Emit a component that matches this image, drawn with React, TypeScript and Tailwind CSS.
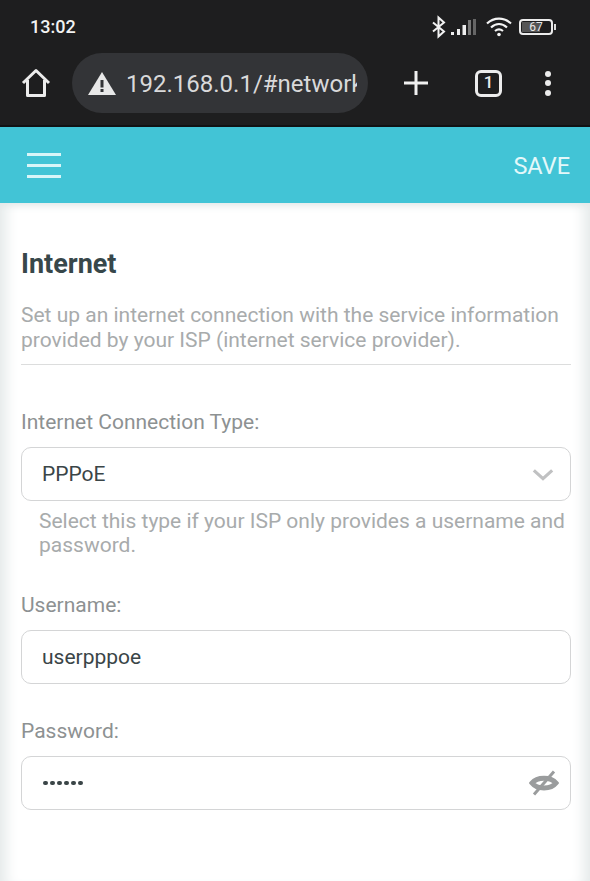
import React from "react";

const StatusIcons = () => (
  <div className="flex items-center">
    {/* bluetooth */}
    <svg width="16" height="24" viewBox="0 0 16 24" fill="none" stroke="#f2f2f2" strokeWidth="2">
      <path d="M2 7.5 L13 16.5 L7.5 21.5 V2.5 L13 7.5 L2 16.5" />
    </svg>
    {/* signal */}
    <svg width="28" height="20" viewBox="0 0 28 20" className="ml-[3px]">
      <rect x="1" y="15" width="3" height="3" fill="#eee" />
      <rect x="7" y="12" width="3" height="6" fill="#eee" />
      <rect x="12.5" y="8" width="3.5" height="10" fill="#eee" />
      <rect x="18" y="3" width="3" height="15" fill="#777" />
      <rect x="23" y="2" width="3" height="16" fill="#666" />
    </svg>
    {/* wifi */}
    <svg width="26" height="22" viewBox="0 0 26 22" fill="none" stroke="#f4f4f4" strokeWidth="2.2" className="ml-[8px]">
      <path d="M1 7.5 C8 1 18 1 25 7.5" />
      <path d="M5 11.5 C10 7 16 7 21 11.5" />
      <path d="M9 15 C11.5 13 14.5 13 17 15" />
      <circle cx="13" cy="18.5" r="1.8" fill="#f4f4f4" stroke="none" />
    </svg>
    {/* battery */}
    <div className="ml-[7px] flex items-center">
      <div className="relative flex h-[16px] w-[34px] items-center justify-center rounded-[4px] border-2 border-[#ececec]">
        <div className="absolute inset-y-[1px] left-[1px] w-[18px] bg-[#555]" />
        <span className="relative text-[12px] leading-none text-[#e8e8e8]">67</span>
      </div>
      <div className="ml-[1px] h-[6px] w-[2px] bg-[#ddd]" />
    </div>
  </div>
);

const EyeOff = () => (
  <svg width="30" height="26" viewBox="0 0 30 26" fill="none">
    <path d="M3 13 C8 6.500 22 6.500 27 13 C22 19.500 8 19.500 3 13 Z" stroke="#9a9c9d" strokeWidth="5" />
    <path d="M5 24.500 L25 1.500" stroke="#9a9c9d" strokeWidth="3" />
  </svg>
);

export default function App() {
  return (
    <div className="flex h-[881px] w-[590px] flex-col overflow-hidden bg-white font-['Roboto',sans-serif]">
      <div className="h-[127px] shrink-0 border-b-2 border-[#111214] bg-[#1e1e1f]">
        <div className="flex h-[53px] items-center justify-between pl-[30px] pr-[34px]">
          <span className="text-[18px] font-medium text-[#f2f2f2]">13:02</span>
          <StatusIcons />
        </div>
        <div className="flex h-[60px] items-center">
          <div className="flex w-[72px] justify-center">
            <svg width="30" height="30" viewBox="0 0 30 30" fill="none" stroke="#ececec" strokeWidth="3" strokeLinejoin="round">
              <path d="M2 15 L15 2.500 L28 15" />
              <path d="M6.500 12 V27.500 H23.500 V12" />
            </svg>
          </div>
          <div className="flex h-[60px] w-[296px] items-center overflow-hidden rounded-full bg-[#333437] pl-[16px] pr-[11px]">
            <svg width="28" height="24" viewBox="0 0 28 24" className="shrink-0">
              <path d="M14 1 L28 24 H0 Z" fill="#e8e8e8" />
              <rect x="12.500" y="9" width="3" height="7.500" fill="#333437" />
              <rect x="12.500" y="18" width="3" height="3" fill="#333437" />
            </svg>
            <span className="ml-[10px] mt-[2px] overflow-hidden whitespace-nowrap text-[24px] text-[#d9d9da]">
              192.168.0.1/#network
            </span>
          </div>
          <div className="ml-[35px]">
            <svg width="26" height="26" viewBox="0 0 26 26" stroke="#f0f0f0" strokeWidth="3">
              <path d="M1 13 H25 M13 1 V25" />
            </svg>
          </div>
          <div className="ml-[46px] flex h-[27px] w-[27px] items-center justify-center rounded-[6px] border-[3px] border-[#ececec] text-[17px] font-medium text-[#ececec]">
            1
          </div>
          <div className="ml-[43px] flex flex-col gap-[3.500px]">
            <div className="h-[6px] w-[6px] rounded-full bg-[#ececec]" />
            <div className="h-[6px] w-[6px] rounded-full bg-[#ececec]" />
            <div className="h-[6px] w-[6px] rounded-full bg-[#ececec]" />
          </div>
        </div>
      </div>

      <div className="flex h-[76px] shrink-0 items-center justify-between bg-[#42c4d6] pl-[27px] pr-[20px]">
        <div className="flex w-[34px] flex-col gap-[8px]">
          <div className="h-[3px] bg-[#d8f5f8]" />
          <div className="h-[3px] bg-[#d8f5f8]" />
          <div className="h-[3px] bg-[#d8f5f8]" />
        </div>
        <span className="mt-[3px] text-[23.500px] text-[#e4f8fa]">SAVE</span>
      </div>

      <div className="flex-1 bg-white pl-[21px] pr-[19.500px] pt-[44px] shadow-[inset_16px_0_14px_-10px_#e4e9e9,inset_-16px_0_14px_-10px_#e4e9e9,inset_0_10px_8px_-8px_#dfe3e3]">
        <h1 className="text-[27px] font-bold leading-[34px] text-[#37474a]">Internet</h1>
        <p className="mt-[22px] border-b border-[#dcdddd] pb-[11px] text-[21px] leading-[25px] text-[#a8abac]">
          Set up an internet connection with the service information provided by your ISP (internet service provider).
        </p>

        <label className="mt-[43px] block text-[21px] leading-[28px] text-[#8d9192]">Internet Connection Type:</label>
        <div className="mt-[11px] flex h-[54px] items-center justify-between rounded-[10px] border border-[#d4d5d6] pl-[20px] pr-[16px] pt-[2px] text-[21px] text-[#3a4547]">
          <span>PPPoE</span>
          <svg width="22" height="14" viewBox="0 0 24 14" fill="none" stroke="#c0c1c2" strokeWidth="3.500">
            <path d="M2 2 L12 11 L22 2" />
          </svg>
        </div>
        <p className="ml-[18px] mt-[8px] text-[21px] leading-[24px] text-[#a8abac]">
          Select this type if your ISP only provides a username and password.
        </p>

        <label className="mt-[34px] block text-[21px] leading-[28px] text-[#8d9192]">Username:</label>
        <div className="mt-[11px] flex h-[54px] items-center rounded-[10px] border border-[#d4d5d6] pl-[20px] pt-[2px] text-[21px] text-[#3a4547]">
          userpppoe
        </div>

        <label className="mt-[33px] block text-[21px] leading-[28px] text-[#8d9192]">Password:</label>
        <div className="mt-[11px] flex h-[54px] items-center justify-between rounded-[10px] border border-[#d4d5d6] pl-[21px] pr-[11px]">
          <div className="flex gap-[2.500px]">
            {[0, 1, 2, 3, 4, 5].map((i) => (
              <div key={i} className="h-[4.500px] w-[4.500px] rounded-full bg-[#3a4547]" />
            ))}
          </div>
          <EyeOff />
        </div>
      </div>
    </div>
  );
}
